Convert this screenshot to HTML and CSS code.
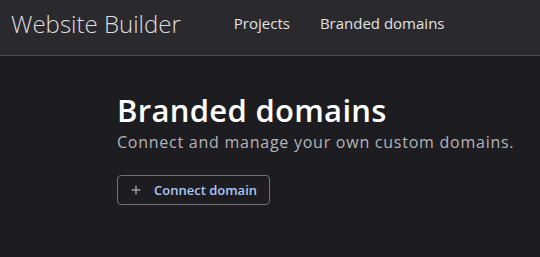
FILE: index.html
```html
<!DOCTYPE html>
<html lang="en">
<head>
<meta charset="utf-8">
<title>Branded domains</title>
<link rel="stylesheet" href="styles.css">
</head>
<body>
<header class="topbar">
  <div class="brand">Website Builder</div>
  <nav class="nav">
    <a class="nav-link" href="#">Projects</a>
    <a class="nav-link" href="#">Branded domains</a>
  </nav>
</header>
<main class="content">
  <h1 class="title">Branded domains</h1>
  <p class="subtitle">Connect and manage your own custom domains.</p>
  <button class="btn" type="button">
    <svg class="btn-icon" width="10" height="10" viewBox="0 0 10 10" aria-hidden="true"><path d="M5 0.5V9.5M0.5 5H9.5" stroke="currentColor" stroke-width="1.4" fill="none"/></svg>
    <span class="btn-label">Connect domain</span>
  </button>
</main>
</body>
</html>
```
FILE: styles.css
```css
* { box-sizing: border-box; }
html, body { margin: 0; padding: 0; }
body {
  background: #1d1c21;
  color: #e6e6e6;
  font-family: "Open Sans", "Liberation Sans", sans-serif;
  width: 540px;
  height: 257px;
  overflow: hidden;
}
.topbar {
  height: 56px;
  background: #2a292e;
  border-bottom: 1px solid #48474c;
  display: flex;
  align-items: center;
  padding: 0 0 9px 11px;
}
.brand {
  font-weight: 300;
  font-size: 24px;
  color: #dedede;
  margin-right: 53px;
}
.nav { display: flex; gap: 30px; }
.nav-link {
  color: #e2e2e2;
  text-decoration: none;
  font-size: 15px;
  font-weight: 500;
}
.content {
  padding: 36px 0 0 117px;
}
.title {
  margin: 0;
  font-size: 31px;
  font-weight: 600;
  color: #ffffff;
  line-height: 36px;
  letter-spacing: 0.3px;
}
.subtitle {
  margin: 3px 0 0;
  font-size: 16px;
  color: #b4b4b8;
  line-height: 22px;
  letter-spacing: 0.75px;
}
.btn {
  margin-top: 22px;
  display: inline-flex;
  align-items: center;
  gap: 13px;
  width: 153px;
  height: 30px;
  padding: 0 0 0 13px;
  background: transparent;
  border: 1px solid #6f727b;
  border-radius: 4px;
  color: #a9c7f5;
  font-family: inherit;
  font-size: 13px;
  font-weight: 600;
}
.btn-icon { color: #a0a2aa; }
```
